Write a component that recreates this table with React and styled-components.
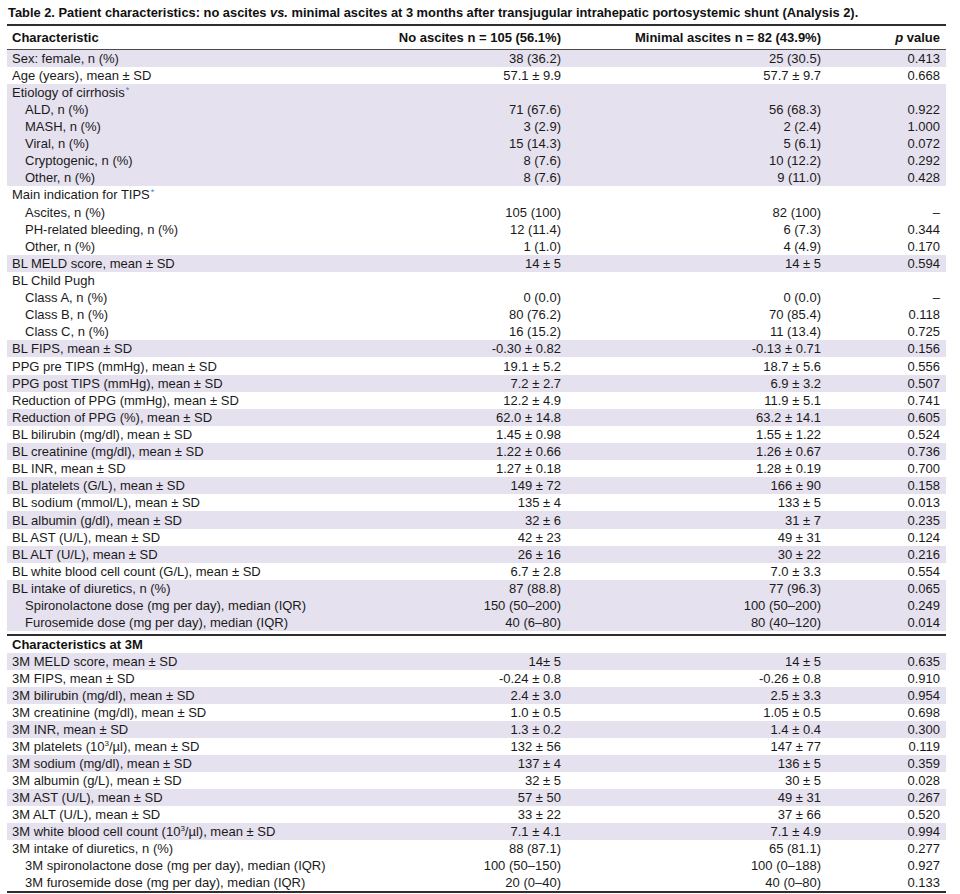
import React from "react";
import styled, { createGlobalStyle } from "styled-components";

const GlobalStyle = createGlobalStyle`
  html, body { margin: 0; padding: 0; background: #ffffff; }
  body { font-family: "Liberation Sans", Arial, sans-serif; color: #1a1a1a; }
`;

const Page = styled.div`
  width: 960px;
  padding: 0 14px 0 7px;
  box-sizing: border-box;
`;

const Caption = styled.div`
  height: 19px;
  padding: 5px 0 0 1px;
  font-size: 12.87px;
  line-height: 15px;
  font-weight: 700;
  white-space: nowrap;
  color: #111;
`;

const Table = styled.div`
  width: 939px;
  font-size: 13px;
`;

const Rule = styled.div`
  height: 2px;
  background: #2e2e2e;
  margin-top: ${(p) => p.$gap || 0}px;
`;

const columns = "360px 199px 260px 120px";

const HeaderRow = styled.div`
  display: grid;
  grid-template-columns: ${columns};
  height: 22.5px;
  align-items: center;
  border-bottom: 1px solid #4a4a4a;
  font-weight: 700;
  line-height: 15px;
  white-space: nowrap;
  color: #111;
`;

const Section = styled.div`
  display: grid;
  grid-auto-rows: ${(p) => p.$rowH}px;
`;

const Row = styled.div`
  display: grid;
  grid-template-columns: ${columns};
  align-items: center;
  background: ${(p) => (p.$shade ? "#e6e1ee" : "transparent")};
  line-height: 15px;
  white-space: nowrap;
`;

const Label = styled.div`
  padding-left: ${(p) => (p.$indent ? 18 : 5)}px;
  font-weight: ${(p) => (p.$bold ? 700 : 400)};
  color: ${(p) => (p.$bold ? "#111" : "inherit")};
`;

const Value = styled.div`
  text-align: right;
  padding-right: ${(p) => p.$pad || 5}px;
`;

const Star = styled.sup`
  font-size: 9px;
  line-height: 0;
  vertical-align: 4px;
  color: #3f7fd6;
  margin-left: 1px;
`;

const Sup = styled.sup`
  font-size: 8px;
  line-height: 0;
  vertical-align: 5px;
`;

const baseline = [
  ["Sex: female, n (%)", "38 (36.2)", "25 (30.5)", "0.413", 1],
  ["Age (years), mean ± SD", "57.1 ± 9.9", "57.7 ± 9.7", "0.668", 0],
  [<>Etiology of cirrhosis<Star>*</Star></>, "", "", "", 1],
  ["ALD, n (%)", "71 (67.6)", "56 (68.3)", "0.922", 1, 1],
  ["MASH, n (%)", "3 (2.9)", "2 (2.4)", "1.000", 1, 1],
  ["Viral, n (%)", "15 (14.3)", "5 (6.1)", "0.072", 1, 1],
  ["Cryptogenic, n (%)", "8 (7.6)", "10 (12.2)", "0.292", 1, 1],
  ["Other, n (%)", "8 (7.6)", "9 (11.0)", "0.428", 1, 1],
  [<>Main indication for TIPS<Star>*</Star></>, "", "", "", 0],
  ["Ascites, n (%)", "105 (100)", "82 (100)", "–", 0, 1],
  ["PH-related bleeding, n (%)", "12 (11.4)", "6 (7.3)", "0.344", 0, 1],
  ["Other, n (%)", "1 (1.0)", "4 (4.9)", "0.170", 0, 1],
  ["BL MELD score, mean ± SD", "14 ± 5", "14 ± 5", "0.594", 1],
  ["BL Child Pugh", "", "", "", 0],
  ["Class A, n (%)", "0 (0.0)", "0 (0.0)", "–", 0, 1],
  ["Class B, n (%)", "80 (76.2)", "70 (85.4)", "0.118", 0, 1],
  ["Class C, n (%)", "16 (15.2)", "11 (13.4)", "0.725", 0, 1],
  ["BL FIPS, mean ± SD", "-0.30 ± 0.82", "-0.13 ± 0.71", "0.156", 1],
  ["PPG pre TIPS (mmHg), mean ± SD", "19.1 ± 5.2", "18.7 ± 5.6", "0.556", 0],
  ["PPG post TIPS (mmHg), mean ± SD", "7.2 ± 2.7", "6.9 ± 3.2", "0.507", 1],
  ["Reduction of PPG (mmHg), mean ± SD", "12.2 ± 4.9", "11.9 ± 5.1", "0.741", 0],
  ["Reduction of PPG (%), mean ± SD", "62.0 ± 14.8", "63.2 ± 14.1", "0.605", 1],
  ["BL bilirubin (mg/dl), mean ± SD", "1.45 ± 0.98", "1.55 ± 1.22", "0.524", 0],
  ["BL creatinine (mg/dl), mean ± SD", "1.22 ± 0.66", "1.26 ± 0.67", "0.736", 1],
  ["BL INR, mean ± SD", "1.27 ± 0.18", "1.28 ± 0.19", "0.700", 0],
  ["BL platelets (G/L), mean ± SD", "149 ± 72", "166 ± 90", "0.158", 1],
  ["BL sodium (mmol/L), mean ± SD", "135 ± 4", "133 ± 5", "0.013", 0],
  ["BL albumin (g/dl), mean ± SD", "32 ± 6", "31 ± 7", "0.235", 1],
  ["BL AST (U/L), mean ± SD", "42 ± 23", "49 ± 31", "0.124", 0],
  ["BL ALT (U/L), mean ± SD", "26 ± 16", "30 ± 22", "0.216", 1],
  ["BL white blood cell count (G/L), mean ± SD", "6.7 ± 2.8", "7.0 ± 3.3", "0.554", 0],
  ["BL intake of diuretics, n (%)", "87 (88.8)", "77 (96.3)", "0.065", 1],
  ["Spironolactone dose (mg per day), median (IQR)", "150 (50–200)", "100 (50–200)", "0.249", 1, 1],
  ["Furosemide dose (mg per day), median (IQR)", "40 (6–80)", "80 (40–120)", "0.014", 1, 1],
];

const threeMonths = [
  ["Characteristics at 3M", "", "", "", 0, 0, 1],
  ["3M MELD score, mean ± SD", "14± 5", "14 ± 5", "0.635", 1],
  ["3M FIPS, mean ± SD", "-0.24 ± 0.8", "-0.26 ± 0.8", "0.910", 0],
  ["3M bilirubin (mg/dl), mean ± SD", "2.4 ± 3.0", "2.5 ± 3.3", "0.954", 1],
  ["3M creatinine (mg/dl), mean ± SD", "1.0 ± 0.5", "1.05 ± 0.5", "0.698", 0],
  ["3M INR, mean ± SD", "1.3 ± 0.2", "1.4 ± 0.4", "0.300", 1],
  [<>3M platelets (10<Sup>3</Sup>/µl), mean ± SD</>, "132 ± 56", "147 ± 77", "0.119", 0],
  ["3M sodium (mg/dl), mean ± SD", "137 ± 4", "136 ± 5", "0.359", 1],
  ["3M albumin (g/L), mean ± SD", "32 ± 5", "30 ± 5", "0.028", 0],
  ["3M AST (U/L), mean ± SD", "57 ± 50", "49 ± 31", "0.267", 1],
  ["3M ALT (U/L), mean ± SD", "33 ± 22", "37 ± 66", "0.520", 0],
  [<>3M white blood cell count (10<Sup>3</Sup>/µl), mean ± SD</>, "7.1 ± 4.1", "7.1 ± 4.9", "0.994", 1],
  ["3M intake of diuretics, n (%)", "88 (87.1)", "65 (81.1)", "0.277", 0],
  ["3M spironolactone dose (mg per day), median (IQR)", "100 (50–150)", "100 (0–188)", "0.927", 0, 1],
  ["3M furosemide dose (mg per day), median (IQR)", "20 (0–40)", "40 (0–80)", "0.133", 0, 1],
];

function DataRow({ row }) {
  const [label, a, b, p, shade, indent, bold] = row;
  return (
    <Row $shade={!!shade}>
      <Label $indent={!!indent} $bold={!!bold}>{label}</Label>
      <Value>{a}</Value>
      <Value>{b}</Value>
      <Value $pad={6}>{p}</Value>
    </Row>
  );
}

export default function App() {
  return (
    <Page>
      <GlobalStyle />
      <Caption>
        Table 2. Patient characteristics: no ascites <i>vs.</i> minimal ascites at 3 months after
        transjugular intrahepatic portosystemic shunt (Analysis 2).
      </Caption>
      <Table>
        <Rule />
        <HeaderRow>
          <Label $bold>Characteristic</Label>
          <Value>No ascites n = 105 (56.1%)</Value>
          <Value>Minimal ascites n = 82 (43.9%)</Value>
          <Value $pad={6}>
            <i>p</i> value
          </Value>
        </HeaderRow>
        <Section $rowH={17.12}>
          {baseline.map((r, i) => (
            <DataRow key={i} row={r} />
          ))}
        </Section>
        <Rule $gap={3} />
        <Section $rowH={17}>
          {threeMonths.map((r, i) => (
            <DataRow key={i} row={r} />
          ))}
        </Section>
        <Rule />
      </Table>
    </Page>
  );
}
